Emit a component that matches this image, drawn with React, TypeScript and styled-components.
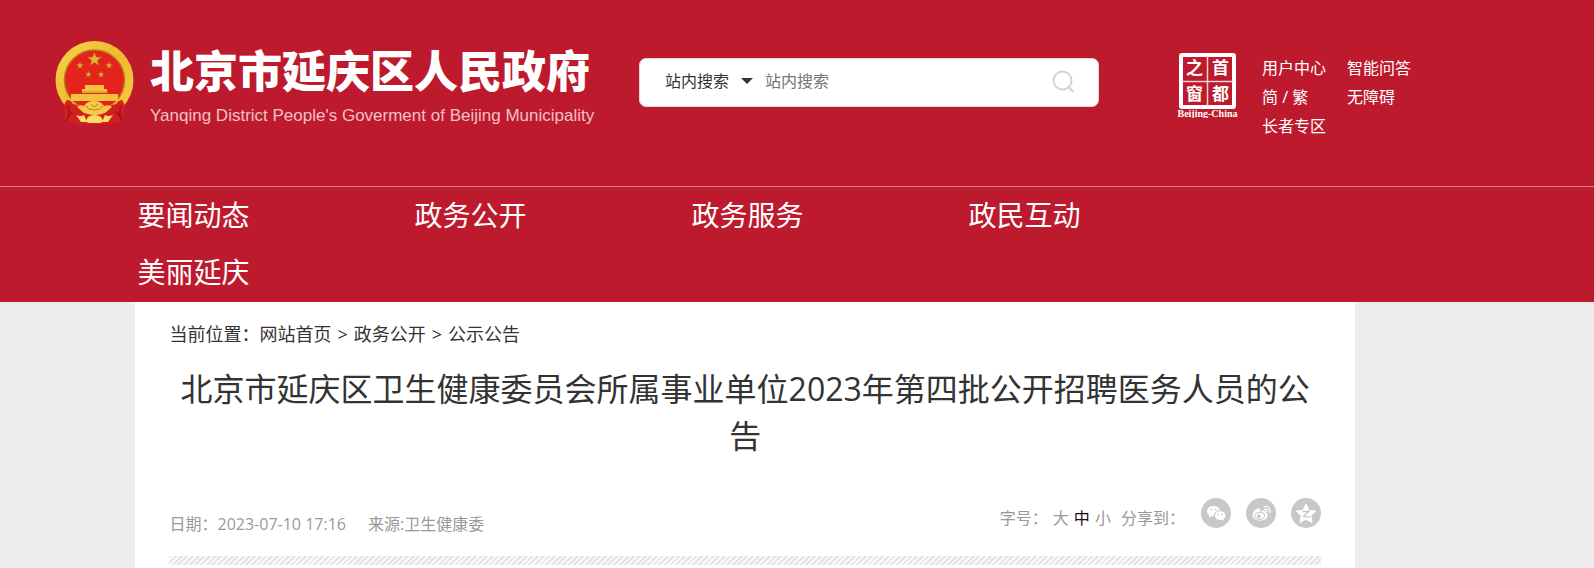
import React from 'react';
import styled, { createGlobalStyle } from 'styled-components';

const RED = '#bd1a2d';

const GlobalStyle = createGlobalStyle`
  *, *::before, *::after { box-sizing: border-box; }
  body {
    margin: 0;
    background: #ededed;
    color: #333;
    font-family: 'Open Sans', 'Noto Sans CJK SC', sans-serif;
    font-size: 16px;
    line-height: 24px;
  }
  a { color: inherit; text-decoration: none; }
  h1, p { margin: 0; }
`;

const Page = styled.div`
  min-height: 100vh;
  display: flex;
  flex-direction: column;
`;

const Header = styled.header`
  background: ${RED};
  color: #fff;
`;

const HeaderTop = styled.div`
  display: flex;
  align-items: flex-start;
  padding: 40px 0 40px 55px;
  min-height: 186px;
`;

const Brand = styled.a`
  display: flex;
  gap: 16px;
  width: 584px;
  flex-shrink: 0;
`;

const BrandText = styled.span`
  display: flex;
  flex-direction: column;
`;

const BrandName = styled.span`
  font-size: 44px;
  line-height: 62px;
  font-weight: 900;
  white-space: nowrap;
`;

const BrandSub = styled.span`
  font-family: 'Liberation Sans', Arial, sans-serif;
  font-size: 17px;
  line-height: 28px;
  white-space: nowrap;
  color: #f2c1c6;
`;

const SearchForm = styled.form`
  display: flex;
  align-items: center;
  flex: 0 0 460px;
  height: 49px;
  margin: 18px 77px 0 0;
  padding: 0 23px 3px 25px;
  background: #fff;
  border: 1px solid #e3d5d6;
  border-radius: 7px;
`;

const ScopeWrap = styled.div`
  display: flex;
  align-items: center;
  width: 100px;
  color: #333;
`;

const Scope = styled.select`
  appearance: none;
  border: 0;
  padding: 0;
  width: 76px;
  background: transparent;
  font: inherit;
  color: inherit;
`;

const Field = styled.input`
  flex: 1;
  min-width: 0;
  border: 0;
  padding: 0;
  outline: 0;
  background: transparent;
  font: inherit;
  color: #333;
  &::placeholder { color: #757575; opacity: 1; }
`;

const IconButton = styled.button`
  display: flex;
  padding: 0;
  border: 0;
  background: transparent;
`;

const Seal = styled.a`
  display: flex;
  margin: 12px 23px 0 0;
`;

const Tools = styled.nav`
  display: grid;
  grid-template-columns: 64px 64px;
  column-gap: 21px;
  grid-auto-rows: 29px;
  line-height: 29px;
  margin-top: 14px;
  white-space: nowrap;
`;

const NavBar = styled.nav`
  border-top: 1px solid #db8089;
  padding: 0 15% 0 8.5%;
`;

const NavList = styled.ul`
  display: grid;
  grid-template-columns: repeat(auto-fill, 277px);
  list-style: none;
  margin: 0;
  padding: 0 0 1px 2px;
  font-size: 28px;
  line-height: 57px;
`;

const Main = styled.main`
  flex: 1;
  margin: 0 15% 0 8.5%;
  padding: 0 34px;
  background: #fff;
`;

const Crumbs = styled.nav`
  display: flex;
  gap: 6px;
  padding-top: 19px;
  font-size: 18px;
  line-height: 26px;
`;

const Title = styled.h1`
  margin-top: 18px;
  font-size: 32px;
  line-height: 47px;
  font-weight: 400;
  text-align: center;
`;

const Meta = styled.div`
  display: flex;
  justify-content: space-between;
  align-items: flex-start;
  padding-top: 37px;
  height: 97px;
  color: #999;
`;

const MetaLeft = styled.p`
  display: flex;
  gap: 22px;
  padding-top: 16px;
`;

const MetaRight = styled.div`
  display: flex;
  align-items: center;
  white-space: nowrap;
`;

const Sizes = styled.div`
  display: flex;
  gap: 5px;
  padding-top: 10px;
`;

const SizeButton = styled.button<{ $active?: boolean }>`
  border: 0;
  padding: 0;
  background: transparent;
  font: inherit;
  color: ${(p) => (p.$active ? '#111' : 'inherit')};
`;

const ShareLabel = styled.span`
  padding: 10px 16px 0 10px;
`;

const ShareList = styled.div`
  display: flex;
  gap: 15px;
`;

const ShareLink = styled.a`
  display: flex;
  width: 30px;
  height: 30px;
  border-radius: 50%;
  background: #c8c8c8;
`;

const Stripes = styled.div`
  height: 9px;
  background: repeating-linear-gradient(135deg, #e4e4e4 0 2px, #fafafa 2px 4px);
`;

const star = (cx: number, cy: number, r: number) =>
  Array.from({ length: 10 }, (_, i) => {
    const d = i % 2 ? r * 0.4 : r;
    const a = (Math.PI / 5) * i - Math.PI / 2;
    return `${(cx + d * Math.cos(a)).toFixed(2)},${(cy + d * Math.sin(a)).toFixed(2)}`;
  }).join(' ');

const Emblem = () => (
  <svg width="79" height="86" viewBox="0 0 79 86" aria-hidden="true">
    <defs>
      <linearGradient id="gold" x1="0" y1="0" x2="1" y2="1">
        <stop offset="0" stopColor="#f7d54c" />
        <stop offset="0.5" stopColor="#eeb92f" />
        <stop offset="1" stopColor="#f6cf3f" />
      </linearGradient>
    </defs>
    <ellipse cx="39.5" cy="40" rx="39" ry="39" fill="url(#gold)" />
    <circle cx="39.5" cy="40" r="30" fill="#e3231c" stroke="#b8781f" strokeWidth="1.5" />
    <path d="M12 60q4 0 6 4l21 6 22-6q3-4 6-4 3 3 2 10l-1 11q-7 1-12 3H22q-5-2-12-3L9 70q0-7 3-10z" fill="#d41f22" />
    <path d="M17 72q-4 4-6 10M61 72q5 5 7 10M13 66q2 4 0 12M66 66q-2 4 0 12" stroke="#a81420" strokeWidth="2" fill="none" />
    <g fill="#e9b533" stroke="#a9641c" strokeWidth="0.6">
      <polygon points={star(39.5, 19.5, 7.5)} />
      <polygon points={star(25, 25.5, 3.8)} />
      <polygon points={star(54, 25.5, 3.8)} />
      <polygon points={star(33.5, 34.5, 3.5)} />
      <polygon points={star(46, 34.5, 3.5)} />
    </g>
    <path d="M30 45h19v4h3v4H27v-4h3zM16 54h47v7H16z" fill="#f3c13d" />
    <path d="M27 52h26" stroke="#c98a22" strokeWidth="1" />
    <path d="M29 66q3-5 10-5t10 5q6-2 8 1l-7 6q-10 4-21 0l-7-6q2-3 7-1z" fill="#f5cb45" />
    <path d="M31 66q2 4 8 4t9-4M36 64l3 3 4-3" stroke="#bd7c20" strokeWidth="1" fill="none" />
    <path d="M21 75q5 2 8 0l3 7h-6zM58 75q-5 2-8 0l-3 7h6zM31 81q1-6 8.500-6t8.500 6l-2 2H33z" fill="#fadc62" />
  </svg>
);

const SealMark = () => (
  <svg width="63" height="66" viewBox="0 0 63 66" role="img" aria-label="首都之窗">
    <rect x="5" y="3" width="53" height="52" rx="1" fill="none" stroke="#fff" strokeWidth="4" />
    <path d="M31.500 4v50M6 29.500h51" stroke="#f4d0d4" strokeWidth="1.500" />
    <g fill="#fff" fontFamily="'Noto Sans CJK SC', sans-serif" fontWeight="700" fontSize="17" textAnchor="middle">
      <text x="18.500" y="22">之</text>
      <text x="44.500" y="22">首</text>
      <text x="18.500" y="48">窗</text>
      <text x="44.500" y="48">都</text>
    </g>
    <text x="31.500" y="65" fill="#fff" fontFamily="'Liberation Serif', serif" fontWeight="700" fontSize="10" textAnchor="middle">
      Beijing-China
    </text>
  </svg>
);

const Wechat = () => (
  <svg width="30" height="30" viewBox="0 0 30 30" aria-hidden="true">
    <path d="M12.500 8C8.600 8 6 10.300 6 13.300c0 1.700.9 3.100 2.300 4.100l-.6 2.100 2.500-1.300 2.700.4c-.6-3.600 2.400-6.100 6.100-6.100C18.500 9.700 15.700 8 12.500 8z" fill="#fff" />
    <path d="M24.500 17.600c0-2.500-2.400-4.400-5.300-4.400s-5.300 1.900-5.300 4.400 2.400 4.400 5.300 4.400l1.800-.3 2 1.100-.5-1.800c1.200-.8 2-2 2-3.400z" fill="#fff" />
    <g fill="#c8c8c8">
      <circle cx="10.300" cy="11.600" r="0.900" /><circle cx="14.700" cy="11.600" r="0.900" />
      <circle cx="17.400" cy="16.400" r="0.800" /><circle cx="21" cy="16.400" r="0.800" />
    </g>
  </svg>
);

const Weibo = () => (
  <svg width="30" height="30" viewBox="0 0 30 30" fill="none" aria-hidden="true">
    <path d="M13.800 11.800c.3-1.600-1.100-2-2.900-1C8.600 12 6.500 14.800 6.500 17.300c0 3.300 3.400 5.300 7.300 5.300 4.800 0 8-2.500 8-5.100 0-1.500-1-2.400-2.200-2.800.4-1.500-.4-2.400-2-2.300-1.200 0-2.600.5-3.300.8z" fill="#fff" />
    <ellipse cx="13.600" cy="17.800" rx="5" ry="3.600" stroke="#c8c8c8" strokeWidth="1.100" transform="rotate(-8 13.600 17.800)" />
    <circle cx="12.800" cy="18.200" r="1.900" fill="#c8c8c8" />
    <path d="M18.500 11.200c1.800-.3 3 .9 2.600 2.600M18.300 8.500c3.700-.6 6.200 2 5.500 5.800" stroke="#fff" strokeWidth="1.400" strokeLinecap="round" />
  </svg>
);

const Qzone = () => (
  <svg width="30" height="30" viewBox="0 0 30 30" aria-hidden="true">
    <path d="M15 6l2.900 6.300 6.900.8-5.100 4.700 1.400 6.700L15 21.200l-6.100 3.300 1.400-6.700-5.100-4.700 6.900-.8z" fill="#fff" stroke="#fff" strokeLinejoin="round" />
    <path d="M11.500 13.500h6.500l-5.500 4.800q3 .8 6.800.3" fill="none" stroke="#c8c8c8" strokeWidth="1.300" />
  </svg>
);

const NAV = ['要闻动态', '政务公开', '政务服务', '政民互动', '美丽延庆'];
const TOOLS = ['用户中心', '智能问答', '简 / 繁', '无障碍', '长者专区'];
const SHARES = [
  { name: '微信', Icon: Wechat },
  { name: '微博', Icon: Weibo },
  { name: 'QQ空间', Icon: Qzone },
];

export default function App() {
  return (
    <Page>
      <GlobalStyle />
      <Header>
        <HeaderTop>
          <Brand href="#">
            <Emblem />
            <BrandText>
              <BrandName>北京市延庆区人民政府</BrandName>
              <BrandSub>Yanqing District People's Goverment of Beijing Municipality</BrandSub>
            </BrandText>
          </Brand>
          <SearchForm role="search">
            <ScopeWrap>
              <Scope aria-label="搜索范围" defaultValue="site">
                <option value="site">站内搜索</option>
              </Scope>
              <svg width="12" height="6" viewBox="0 0 12 6" aria-hidden="true">
                <path d="M0 0h12L6 6z" fill="#333" />
              </svg>
            </ScopeWrap>
            <Field type="text" placeholder="站内搜索" aria-label="搜索内容" />
            <IconButton type="button" aria-label="搜索">
              <svg width="23" height="23" viewBox="0 0 23 23" fill="none" stroke="#d2d2d2" strokeWidth="2">
                <circle cx="10.500" cy="10.500" r="9" />
                <path d="M16.500 17l5 5" />
              </svg>
            </IconButton>
          </SearchForm>
          <Seal href="#"><SealMark /></Seal>
          <Tools>
            {TOOLS.map((t) => <a href="#" key={t}>{t}</a>)}
          </Tools>
        </HeaderTop>
        <NavBar>
          <NavList>
            {NAV.map((n) => <li key={n}><a href="#">{n}</a></li>)}
          </NavList>
        </NavBar>
      </Header>
      <Main>
        <Crumbs>
          <span>当前位置：<a href="#">网站首页</a></span>
          <span>&gt;</span>
          <a href="#">政务公开</a>
          <span>&gt;</span>
          <a href="#">公示公告</a>
        </Crumbs>
        <Title>北京市延庆区卫生健康委员会所属事业单位2023年第四批公开招聘医务人员的公告</Title>
        <Meta>
          <MetaLeft>
            <span>日期：2023-07-10 17:16</span>
            <span>来源:卫生健康委</span>
          </MetaLeft>
          <MetaRight>
            <Sizes>
              <span>字号：</span>
              <SizeButton type="button">大</SizeButton>
              <SizeButton type="button" $active>中</SizeButton>
              <SizeButton type="button">小</SizeButton>
            </Sizes>
            <ShareLabel>分享到：</ShareLabel>
            <ShareList>
              {SHARES.map(({ name, Icon }) => (
                <ShareLink href="#" key={name} aria-label={name}><Icon /></ShareLink>
              ))}
            </ShareList>
          </MetaRight>
        </Meta>
        <Stripes />
      </Main>
    </Page>
  );
}
